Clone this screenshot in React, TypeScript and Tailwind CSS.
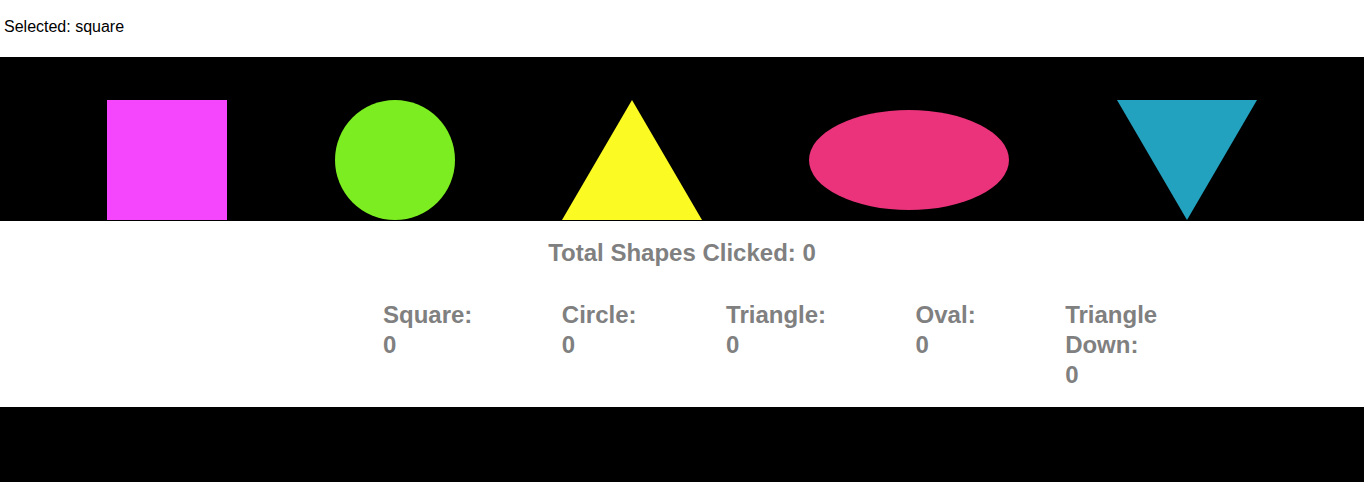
import React from "react";

export default function App() {
  const stats = [
    { label: "Square:", n: 0 },
    { label: "Circle:", n: 0 },
    { label: "Triangle:", n: 0 },
    { label: "Oval:", n: 0 },
    { label: "Triangle Down:", n: 0 },
  ];
  return (
    <div className="w-[1364px] h-[482px] bg-black font-['Liberation_Sans',Arial,sans-serif] overflow-hidden">
      <div className="bg-white h-[57px] pt-[18px] px-[4px] text-[16px] leading-[18px] text-black">
        Selected: square
      </div>
      <div className="bg-black h-[164px] pt-[42px] flex justify-evenly items-center">
        <div className="w-[120px] h-[120px] bg-[#f546fd] shrink-0" />
        <div className="w-[120px] h-[120px] rounded-full bg-[#7ced20] shrink-0" />
        <svg width="140" height="120" viewBox="0 0 140 120" className="shrink-0 block">
          <polygon points="70,0 140,120 0,120" fill="#fcfa23" />
        </svg>
        <div className="w-[200px] h-[100px] rounded-[50%] bg-[#ea337b] shrink-0" />
        <svg width="140" height="120" viewBox="0 0 140 120" className="shrink-0 block">
          <polygon points="0,0 140,0 70,120" fill="#23a2bf" />
        </svg>
      </div>
      <div className="bg-white h-[186px] text-[#808080] font-bold">
        <div className="text-center text-[24px] leading-[30px] pt-[17px]">Total Shapes Clicked: 0</div>
        <div className="flex gap-[89.5px] pl-[383px] pr-[200px] pt-[32px] text-[24px] leading-[30px]">
          {stats.map((s) => (
            <div key={s.label}>
              <div>{s.label}</div>
              <div>{s.n}</div>
            </div>
          ))}
        </div>
      </div>
    </div>
  );
}
